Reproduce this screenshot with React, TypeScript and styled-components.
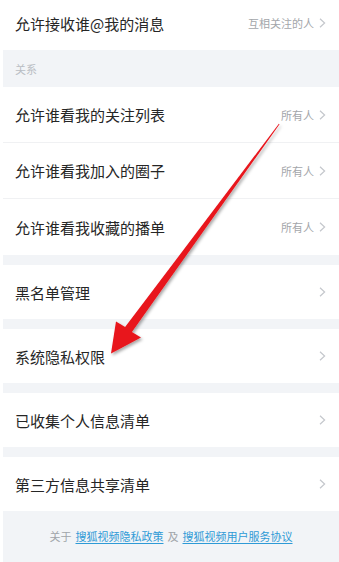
import React from "react";
import styled, { createGlobalStyle } from "styled-components";

type Item = { title: string; value?: string };

const firstGroup: Item[] = [
    { title: "允许谁看我的关注列表", value: "所有人" },
    { title: "允许谁看我加入的圈子", value: "所有人" },
    { title: "允许谁看我收藏的播单", value: "所有人" },
];

const singles: Item[] = [
    { title: "黑名单管理" },
    { title: "系统隐私权限" },
    { title: "已收集个人信息清单" },
    { title: "第三方信息共享清单" },
];

const Chevron: React.FC = () => (
    <svg width="7" height="10" viewBox="0 0 7 10">
        <polyline points="1,0.8 5.6,5 1,9.2" fill="none" stroke="#c4c7cc" strokeWidth="1.2" />
    </svg>
);

const SettingRow: React.FC<{ item: Item; tall?: boolean; divider?: boolean }> = ({ item, tall, divider }) => (
    <Row $tall={tall} $divider={divider}>
        <Title>{item.title}</Title>
        <Right>
            {item.value && <Value>{item.value}</Value>}
            <Chevron />
        </Right>
    </Row>
);

const App: React.FC = () => {
    return (
        <>
            <GlobalStyle />
            <Page>
                <TopRow>
                    <Title>允许接收谁@我的消息</Title>
                    <Right>
                        <Value>互相关注的人</Value>
                        <Chevron />
                    </Right>
                </TopRow>
                <SectionHeader>关系</SectionHeader>
                {firstGroup.map((item, i) => (
                    <SettingRow key={item.title} item={item} tall divider={i < firstGroup.length - 1} />
                ))}
                {singles.map((item) => (
                    <React.Fragment key={item.title}>
                        <Gap />
                        <SettingRow item={item} />
                    </React.Fragment>
                ))}
                <Footer>
                    <span>关于</span>
                    <FooterLink>搜狐视频隐私政策</FooterLink>
                    <span>及</span>
                    <FooterLink>搜狐视频用户服务协议</FooterLink>
                </Footer>
                <Arrow width="339" height="562" viewBox="0 0 339 562">
                    <defs>
                        <filter id="arrowShadow" x="-20%" y="-20%" width="140%" height="140%">
                            <feDropShadow dx="1.5" dy="2" stdDeviation="1.6" floodColor="#000" floodOpacity="0.35" />
                        </filter>
                    </defs>
                    <polygon
                        points="279.5,124.3 131.9,331.9 141,337.5 111,353.5 116,321.5 125.1,327.1 278.9,123.7"
                        fill="#e8141b"
                        filter="url(#arrowShadow)"
                    />
                </Arrow>
            </Page>
        </>
    );
};

const GlobalStyle = createGlobalStyle`
    html, body {
        margin: 0;
        padding: 0;
        background: #ffffff;
    }
    body {
        font-family: "Noto Sans CJK SC", "Noto Sans", sans-serif;
    }
`;

const Page = styled.div`
    position: relative;
    width: 339px;
    height: 562px;
    overflow: hidden;
    display: flex;
    flex-direction: column;
    padding-left: 3px;
    box-sizing: border-box;
    background: #ffffff;
`;

const Row = styled.div<{ $tall?: boolean; $divider?: boolean }>`
    display: flex;
    align-items: center;
    justify-content: space-between;
    flex: none;
    height: ${(p) => (p.$tall ? 56 : 54)}px;
    padding: 0 13px 0 12px;
    box-sizing: border-box;
    background: #ffffff;
    border-bottom: ${(p) => (p.$divider ? "1px solid #f0f1f3" : "none")};
`;

const TopRow = styled(Row)`
    height: 50px;
    padding-bottom: 4px;
`;

const Title = styled.span`
    font-size: 15px;
    color: #262626;
`;

const Right = styled.div`
    display: flex;
    align-items: center;
    gap: 5px;
`;

const Value = styled.span`
    font-size: 11px;
    color: #a3a6aa;
`;

const SectionHeader = styled.div`
    flex: none;
    height: 37px;
    display: flex;
    align-items: center;
    padding-left: 12px;
    font-size: 11px;
    color: #b9bdc3;
    background: #f2f4f7;
`;

const Gap = styled.div`
    flex: none;
    height: 10px;
    background: #f2f4f7;
`;

const Footer = styled.div`
    flex: 1;
    display: flex;
    align-items: center;
    justify-content: center;
    gap: 4px;
    padding-bottom: 2px;
    font-size: 11px;
    color: #a0a4a9;
    background: #f2f4f7;
`;

const FooterLink = styled.span`
    color: #2e9ad6;
    text-decoration: underline;
    text-underline-offset: 2px;
`;

const Arrow = styled.svg`
    position: absolute;
    top: 0;
    left: 0;
    pointer-events: none;
`;

export default App;
